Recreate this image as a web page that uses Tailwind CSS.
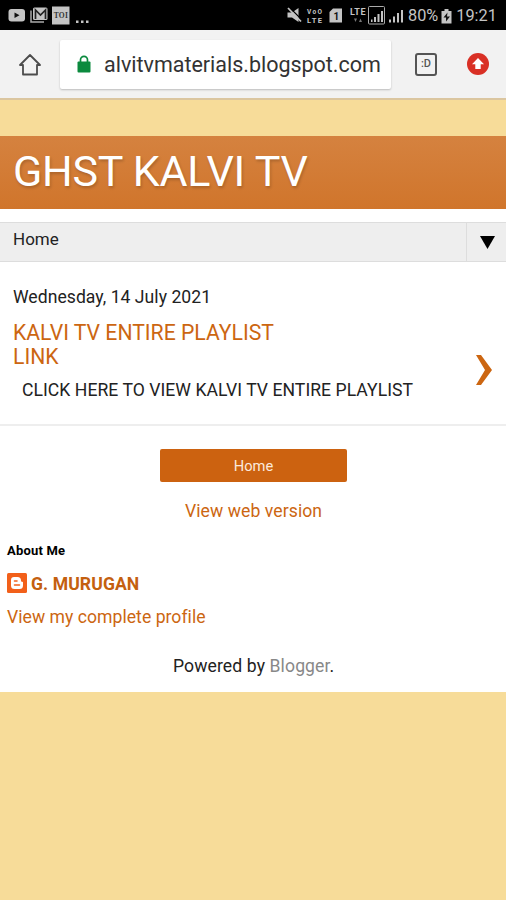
<!DOCTYPE html>
<html lang="en">
<head>
<meta charset="utf-8">
<title>GHST KALVI TV</title>
<script src="https://cdn.jsdelivr.net/npm/@tailwindcss/browser@4"></script>
</head>
<body class="w-[506px] h-[900px] overflow-hidden bg-[#f7dc99] font-['Roboto',sans-serif] text-[#222] whitespace-nowrap">
<header>
  <div class="h-[30px] bg-black flex items-center text-[#c4c4c4]">
    <svg class="w-[95px] h-[30px]" viewBox="0 0 95 30" fill="#c4c4c4">
      <rect x="8.500" y="9" width="16.500" height="12.500" rx="3"/><path d="M14.500 12.500v5.500l5-2.750z" fill="#111"/>
      <path d="M31 10.500v11.500h13" fill="none" stroke="#aaa" stroke-width="1.500"/>
      <rect x="33" y="7.500" width="14.500" height="12.500" rx="1.500"/><path d="M35.500 19v-9l5 5 5-5v9" fill="none" stroke="#222" stroke-width="1.700"/>
      <rect x="52" y="6.500" width="17.500" height="18"/><text x="60.800" y="18" text-anchor="middle" font-family="Liberation Serif" font-size="7.500" font-weight="bold" fill="#333" textLength="14">TOI</text>
      <path d="M76 20.500h2.500v2.500h-2.500zM81 20.500h2.500v2.500h-2.500zM86 20.500h2.500v2.500h-2.500z"/>
    </svg>
    <svg class="w-[123px] h-[30px] ml-[190px]" viewBox="285 0 123 30" fill="#c4c4c4">
      <path d="M287.500 12.500h4.500l6.500-4.500v14l-6.500-4.500h-4.500z"/><path d="M289.500 7.500l13 13" stroke="#000" stroke-width="1.200"/><path d="M288 8l13 13.500" stroke="#c4c4c4" stroke-width="1.800"/>
      <text x="307" y="13.500" font-family="Roboto" font-size="6.500" font-weight="bold" textLength="15">VoO</text>
      <text x="307" y="22.500" font-family="Roboto" font-size="7.500" font-weight="bold" textLength="15">LTE</text>
      <path d="M333 8.500h9v14h-12.500v-10.500z"/><text x="336.300" y="19.500" text-anchor="middle" font-family="Roboto" font-size="10" font-weight="bold" fill="#111">1</text>
      <text x="350" y="15" font-family="Roboto" font-size="9" font-weight="bold" textLength="15.500">LTE</text>
      <path d="M354 18.500h3l-1.500 3.500zM359 22h3l-1.500-3.500z" fill="#777"/>
      <rect x="368.500" y="6.500" width="16" height="17.500" rx="1" fill="none" stroke="#aaa"/>
      <path d="M371 19.500h1.500v2.500h-1.500zM374 17h2v5h-2zM377.500 14h2v8h-2zM381 11h2v11h-2z"/>
      <path d="M389 19.500h2v3h-2zM393 16.500h2v6h-2zM397 13h2v9.500h-2zM401 10h2v12.500h-2z"/>
    </svg>
    <div class="flex items-center text-[16.300px] pt-[3px]"><span>80%</span>
      <svg class="w-[11px] h-[16px] ml-[3px] mb-[2px]" viewBox="0 0 11 16" fill="#c4c4c4"><path d="M3.500 1h4v2H10.500v12.500H.5V3h3z"/><path d="M6.500 4.500l-4 5h2.500v4l4-5H6z" fill="#111"/></svg>
      <span class="ml-[4px]">19:21</span></div>
  </div>
  <div class="h-[70px] bg-[#f2f2f2] border-b-2 border-[#dbc6a0] flex items-start">
    <svg class="w-[24px] h-[26px] ml-[18px] mt-[21px]" viewBox="0 0 24 26" fill="none" stroke="#4c4c4c" stroke-width="1.800"><path d="M2 14L12 4l10 10H19v9.500H5V14z" stroke-linejoin="round"/></svg>
    <div class="ml-[18px] mt-[10px] w-[331px] h-[49px] bg-white rounded-[2px] shadow-[0_1px_2px_#bbb] flex items-center">
      <svg class="w-[14px] h-[18px] ml-[17px] mb-[2px]" viewBox="0 0 14 18"><rect x=".5" y="6.500" width="13" height="11" rx="1" fill="#0b8a3e"/><path d="M3.500 8V4.800a3.500 3.500 0 0 1 7 0V8" fill="none" stroke="#0b8a3e" stroke-width="1.700"/></svg>
      <span class="ml-[13px] pt-[2px] text-[21.500px] tracking-[-0.02px] text-[#333]">alvitvmaterials.blogspot.com</span>
    </div>
    <div class="ml-[24px] mt-[23px] w-[22px] h-[23px] border-2 border-[#555] rounded-[3px] flex items-center justify-center text-[11px] font-medium text-[#555]">:D</div>
    <svg class="w-[22px] h-[22px] ml-[30px] mt-[23px]" viewBox="0 0 22 22"><circle cx="11" cy="11" r="11" fill="#d93025"/><path d="M11 5l6 6.300h-3.300V16H8.300v-4.700H5z" fill="#fff"/></svg>
  </div>
</header>
<main class="mt-[36px]">
  <div class="h-[73px] bg-linear-to-b from-[#d5823f] to-[#d0752b] pl-[13px]">
    <h1 class="text-[43px] leading-[71px] tracking-[-0.25px] text-white [text-shadow:1px_2px_3px_rgba(0,0,0,.2)]">GHST KALVI TV</h1>
  </div>
  <div class="bg-white pt-[13px] h-[483px]">
    <nav class="h-[40px] bg-[#eee] border-y border-[#ddd] flex">
      <div class="w-[467px] pl-[13px] text-[17px] leading-[33px] border-r border-[#ddd]">Home</div>
      <svg class="w-[15px] h-[13px] ml-[12.500px] mt-[13px]" viewBox="0 0 15 13"><path d="M0 0h15L7.500 13z" fill="#000"/></svg>
    </nav>
    <article class="h-[164px] border-b-2 border-[#eee] pl-[13px] pt-[25px] flex text-[17.600px]">
      <div class="w-[462px]">
        <p class="leading-[20px] tracking-[0.03px]">Wednesday, 14 July 2021</p>
        <h2 class="mt-[14px] text-[21.200px] leading-[24px] text-[#cc6611]">KALVI TV ENTIRE PLAYLIST<br>LINK</h2>
        <p class="mt-[11px] ml-[9px] leading-[20px] tracking-[0.04px]">CLICK HERE TO VIEW KALVI TV ENTIRE PLAYLIST</p>
      </div>
      <svg class="w-[18px] h-[30px] mt-[68px]" viewBox="0 0 18 30"><path d="M1 0h5l11 15L6 30H1l9-15z" fill="#cc6611"/></svg>
    </article>
    <div class="mt-[23px] ml-[160px] w-[187px] h-[33px] rounded-[2px] bg-[#cc6210] text-[#fbe9dc] text-[14.700px] leading-[34px] text-center">Home</div>
    <p class="mt-[19px] ml-[185px] text-[17.600px] leading-[20px] tracking-[0.07px] text-[#cc6611]">View web version</p>
    <section class="pl-[7px] mt-[21px]">
      <h3 class="text-[13px] leading-[18px] tracking-[0.2px] font-bold text-black">About Me</h3>
      <div class="mt-[13px] h-[20px] flex items-center text-[#c4600f] text-[17.600px] font-bold">
        <svg class="w-[20px] h-[20px] mr-[4px]" viewBox="0 0 20 20"><rect width="20" height="20" rx="1.500" fill="#f2601a"/><path d="M7 4h3.500a3.500 3.500 0 0 1 3.500 3.500c0 1 .4 1.300 1.200 1.300.6 0 .8.300.8.800V12.500A3.500 3.500 0 0 1 12.500 16H7.500A3.500 3.500 0 0 1 4 12.500V7a3 3 0 0 1 3-3z" fill="#fff"/><path d="M7.500 8h2.500M7.500 12h5" stroke="#f2601a" stroke-width="1.600" stroke-linecap="round"/></svg>
        <span class="tracking-[0.08px] pt-[2px]">G. MURUGAN</span></div>
      <p class="mt-[14px] text-[17.600px] leading-[20px] tracking-[0.03px] text-[#cc6611]">View my complete profile</p>
    </section>
    <footer class="mt-[29px] ml-[173px] text-[17.600px] leading-[20px] tracking-[0.1px]">Powered by <span class="text-[#888]">Blogger</span>.</footer>
  </div>
</main>
</body>
</html>
